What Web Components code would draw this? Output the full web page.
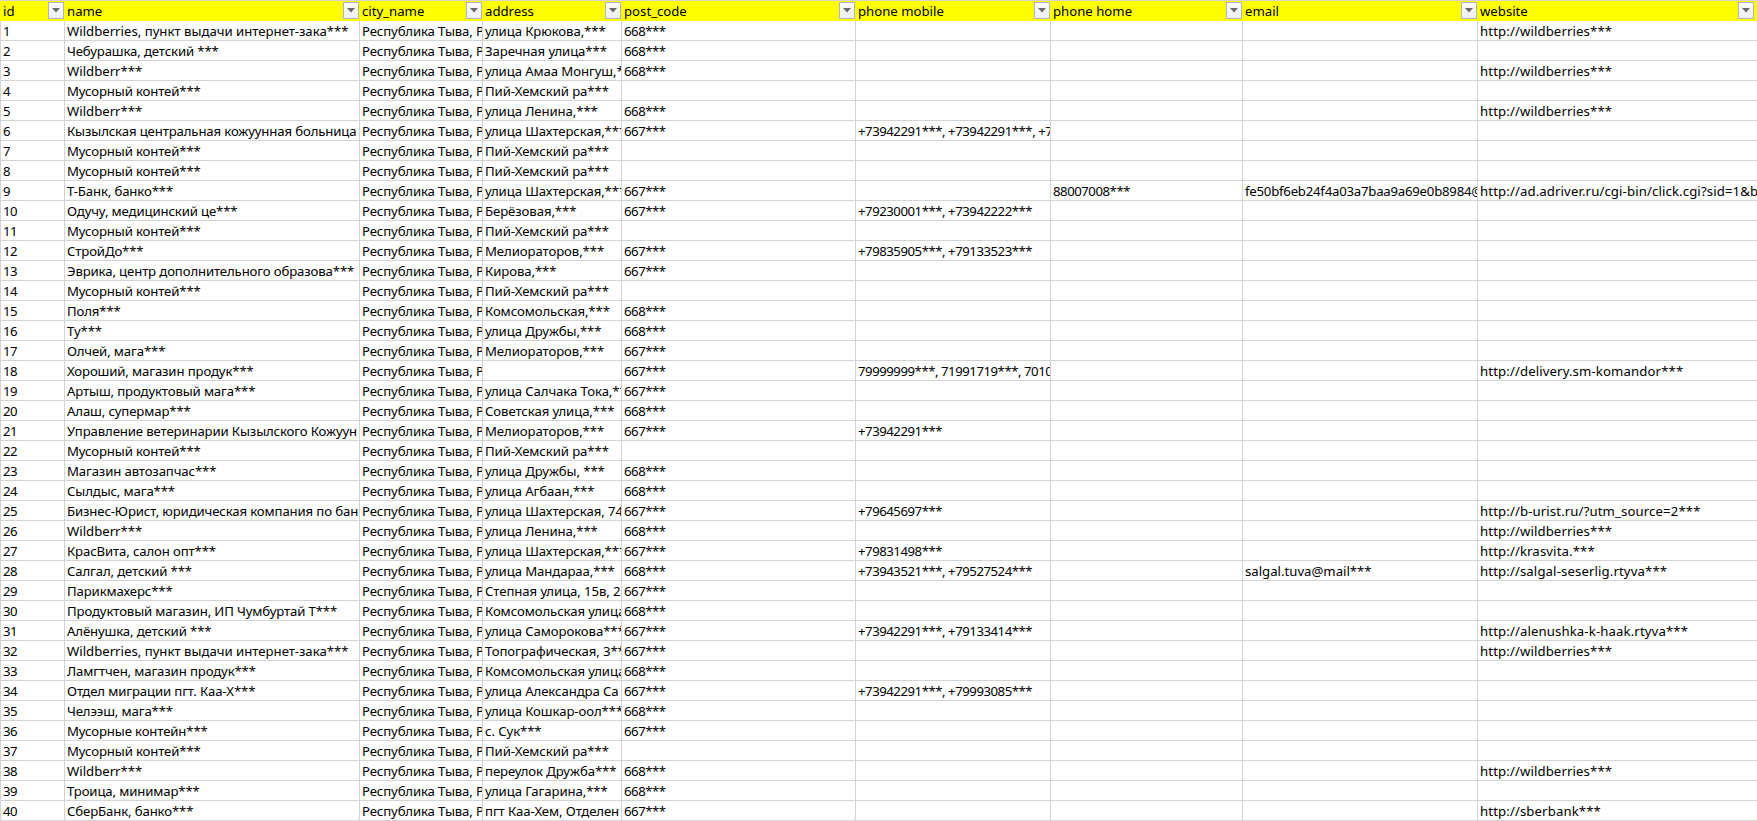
<!DOCTYPE html>
<html lang="ru"><head><meta charset="utf-8"><title>Таблица</title>
<style>
html,body{margin:0;padding:0;background:#fff;overflow:hidden}
body{font:13.18px/19px "Noto Sans","Open Sans",sans-serif;color:#000}
</style></head>
<body>
<x-sheet id="s"></x-sheet>
<script>
const COLS='65px 295px 123px 139px 234px 195px 192px 235px 280px';
class XSheet extends HTMLElement{constructor(){super();this.attachShadow({mode:'open'}).innerHTML=`<style>:host{display:block;width:1757px;height:821px;overflow:hidden;--cols:${COLS}}</style><slot></slot>`}}
class XHeadRow extends HTMLElement{constructor(){super();this.attachShadow({mode:'open'}).innerHTML=`<style>:host{display:grid;grid-template-columns:var(--cols);height:21px;box-sizing:border-box;border-top:1px solid #d6d6d6;background:#ff0}</style><slot></slot>`}}
class XHeadCell extends HTMLElement{constructor(){super();this.attachShadow({mode:'open'}).innerHTML=`<style>
:host{display:flex;align-items:flex-start;justify-content:space-between;min-width:0;padding:0 1px 0 2px;box-sizing:border-box}
:host(:first-child){padding-left:3px}
:host([last]){padding-right:4px}
.t{white-space:nowrap;line-height:19px;padding-top:1px}
x-filter{margin-top:1px}
</style><span class="t"><slot></slot></span><x-filter></x-filter>`}}
class XFilter extends HTMLElement{constructor(){super();this.attachShadow({mode:'open'}).innerHTML=`<style>
:host{display:flex;align-items:center;justify-content:center;flex:none;width:16px;height:17px;box-sizing:border-box;border:1px solid #aeb5c4;background:linear-gradient(#fbfbfb,#eceef1)}
svg{display:block}
</style><svg width="8" height="5" viewBox="0 0 8 5"><path d="M0 0H8L4 4.6Z" fill="#6a6a6a"/></svg>`}}
class XRow extends HTMLElement{constructor(){super();this.attachShadow({mode:'open'}).innerHTML=`<style>:host{display:grid;grid-template-columns:var(--cols);height:20px;box-sizing:border-box;border-bottom:1px solid #d4d4d4}</style><slot></slot>`}}
class XCell extends HTMLElement{constructor(){super();this.attachShadow({mode:'open'}).innerHTML=`<style>
:host{display:block;min-width:0;overflow:hidden;white-space:nowrap;box-sizing:border-box;border-right:1px solid #d4d4d4;padding:1px 0 0 2px;line-height:18px;height:19px}
:host([k=n]){letter-spacing:-.46px}
:host([k=w]){letter-spacing:.12px}
:host([k=c]){letter-spacing:-.13px}
:host([k=a]){letter-spacing:-.09px}
:host([k=h]){letter-spacing:-.22px}
:host(:first-child){border-left:1px solid #d4d4d4}
:host(:last-child){border-right:0}
</style><slot></slot>`}}
[['x-sheet',XSheet],['x-head-row',XHeadRow],['x-head-cell',XHeadCell],['x-filter',XFilter],['x-row',XRow],['x-cell',XCell]].forEach(([n,c])=>customElements.define(n,c));

const W='http://wildberries***',M='Мусорный контей***',P='Пий-Хемский ра***',R='Республика Тыва, Р';
const D=[
['Wildberries, пункт выдачи интернет-зака***','улица Крюкова,***','668***','','','',W],
['Чебурашка, детский ***','Заречная улица***','668***'],
['Wildberr***','улица Амаа Монгуш,***','668***','','','',W],
[M,P],
['Wildberr***','улица Ленина,***','668***','','','',W],
['Кызылская центральная кожуунная больница','улица Шахтерская,***','667***','+73942291***, +73942291***, +7'],
[M,P],[M,P],
['Т-Банк, банко***','улица Шахтерская,***','667***','','88007008***','fe50bf6eb24f4a03a7baa9a69e0b8984@','http://ad.adriver.ru/cgi-bin/click.cgi?sid=1&b'],
['Одучу, медицинский це***','Берёзовая,***','667***','+79230001***, +73942222***'],
[M,P],
['СтройДо***','Мелиораторов,***','667***','+79835905***, +79133523***'],
['Эврика, центр дополнительного образова***','Кирова,***','667***'],
[M,P],
['Поля***','Комсомольская,***','668***'],
['Ту***','улица Дружбы,***','668***'],
['Олчей, мага***','Мелиораторов,***','667***'],
['Хороший, магазин продук***','','667***','79999999***, 71991719***, 7010','','','http://delivery.sm-komandor***'],
['Артыш, продуктовый мага***','улица Салчака Тока,***','667***'],
['Алаш, супермар***','Советская улица,***','668***'],
['Управление ветеринарии Кызылского Кожуун','Мелиораторов,***','667***','+73942291***'],
[M,P],
['Магазин автозапчас***','улица Дружбы, ***','668***'],
['Сылдыс, мага***','улица Агбаан,***','668***'],
['Бизнес-Юрист, юридическая компания по бан','улица Шахтерская, 74','667***','+79645697***','','','http://b-urist.ru/?utm_source=2***'],
['Wildberr***','улица Ленина,***','668***','','','',W],
['КрасВита, салон опт***','улица Шахтерская,***','667***','+79831498***','','','http://krasvita.***'],
['Салгал, детский ***','улица Мандараа,***','668***','+73943521***, +79527524***','','salgal.tuva@mail***','http://salgal-seserlig.rtyva***'],
['Парикмахерс***','Степная улица, 15в, 2','667***'],
['Продуктовый магазин, ИП Чумбуртай Т***','Комсомольская улица','668***'],
['Алёнушка, детский ***','улица Саморокова***','667***','+73942291***, +79133414***','','','http://alenushka-k-haak.rtyva***'],
['Wildberries, пункт выдачи интернет-зака***','Топографическая, 3***','667***','','','',W],
['Ламгтчен, магазин продук***','Комсомольская улица','668***'],
['Отдел миграции пгт. Каа-Х***','улица Александра Са','667***','+73942291***, +79993085***'],
['Челээш, мага***','улица Кошкар-оол***','668***'],
['Мусорные контейн***','с. Сук***','667***'],
[M,P],
['Wildberr***','переулок Дружба***','668***','','','',W],
['Троица, минимар***','улица Гагарина,***','668***'],
['СберБанк, банко***','пгт Каа-Хем, Отделен','667***','','','','http://sberbank***']
];
const sheet=document.getElementById('s');
const hr=document.createElement('x-head-row');
['id','name','city_name','address','post_code','phone mobile','phone home','email','website'].forEach((t,i,a)=>{
  const c=document.createElement('x-head-cell');c.textContent=t;if(i==a.length-1)c.setAttribute('last','');hr.append(c);
});
sheet.append(hr);
const KIND=['n','c','c','a','n','n','n','','w'];
D.forEach((r,i)=>{
  const row=document.createElement('x-row');
  const vals=[String(i+1),r[0],R,r[1],r[2]||'',r[3]||'',r[4]||'',r[5]||'',r[6]||''];
  vals.forEach((v,j)=>{
    const c=document.createElement('x-cell');c.textContent=v;
    let k=KIND[j];
    if(j==1&&v.startsWith('Wildberr'))k='';
    if(j==7&&v.startsWith('fe50'))k='h';
    if(k)c.setAttribute('k',k);
    row.append(c);
  });
  sheet.append(row);
});
</script>
</body></html>
